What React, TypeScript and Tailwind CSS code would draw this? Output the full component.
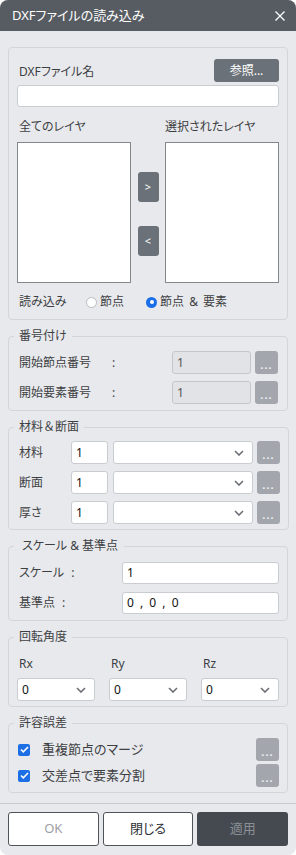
import React from "react";

const font = "font-['Noto_Sans','Noto_Sans_CJK_JP',sans-serif] [font-feature-settings:'palt']";

const Chevron = () => (
  <svg width="10" height="6" viewBox="0 0 10 6" className="shrink-0">
    <path d="M1 1l4 4 4-4" fill="none" stroke="#6b6f75" strokeWidth="1.6" />
  </svg>
);

const DotsButton = () => (
  <div className="w-[23px] h-[23px] shrink-0 rounded-[3px] bg-[#a3a7ad] flex items-end justify-center pb-[4px]">
    <span className="text-[#eef0f2] text-[11px] leading-none tracking-[1px] font-bold">...</span>
  </div>
);

const SelectBox = ({ value = "", className = "" }: { value?: string; className?: string }) => (
  <div
    className={
      "h-[23px] bg-white border border-[#c9ccd1] rounded-[3px] flex items-center justify-between pl-[4px] pr-[8px] text-[12px] text-[#111] " +
      className
    }
  >
    <span>{value}</span>
    <Chevron />
  </div>
);

const Fieldset = ({
  title,
  className = "",
  legendClass = "px-[5px]",
  children,
}: {
  title: React.ReactNode;
  className?: string;
  legendClass?: string;
  children: React.ReactNode;
}) => (
  <fieldset className={"border border-[#d2d5da] rounded-[4px] px-2 mt-2 " + className}>
    <legend className={"-ml-[3px] text-[12px] leading-4 text-[#3d3f43] " + legendClass}>{title}</legend>
    {children}
  </fieldset>
);

const Check = () => (
  <div className="w-[12px] h-[12px] rounded-[2px] bg-[#1d6fe6] flex items-center justify-center shrink-0">
    <svg width="9" height="7" viewBox="0 0 9 7">
      <path d="M1 3.5l2.3 2.3L8 1" fill="none" stroke="white" strokeWidth="1.6" />
    </svg>
  </div>
);

export default function App() {
  return (
    <div className={"w-[296px] h-[855px] bg-white " + font}>
      <div className="w-full h-full rounded-[8px] overflow-hidden bg-[#e8e9ed] flex flex-col">
        {/* title */}
        <div className="h-[31px] shrink-0 bg-[#575c63] flex items-center justify-between pl-[12px] pr-[11px]">
          <span className="text-white text-[13px]">DXFファイルの読み込み</span>
          <svg width="10" height="10" viewBox="0 0 10 10">
            <path d="M0.5 0.5l9 9M9.5 0.5l-9 9" stroke="white" strokeWidth="1.3" />
          </svg>
        </div>

        <div className="px-2 pt-4 text-[#3d3f43] text-[12px]">
          {/* file */}
          <div className="border border-[#d2d5da] rounded-[4px] px-2 pt-[11px] pb-[7px]">
            <div className="flex items-center justify-between">
              <span className="pl-[2px] pt-[3px]">DXFファイル名</span>
              <div className="w-[65px] h-[23px] rounded-[3px] bg-[#6b7178] text-white flex items-center justify-center text-[12px]">
                参照...
              </div>
            </div>
            <div className="mt-[3px] h-[22px] bg-white border border-[#c9ccd1] rounded-[3px]" />
            <div className="mt-3 flex justify-between leading-4">
              <span className="pl-[2px]">全てのレイヤ</span>
              <span className="w-[114px]">選択されたレイヤ</span>
            </div>
            <div className="mt-[7px] flex items-center">
              <div className="w-[114px] h-[141px] bg-white border border-[#84878c]" />
              <div className="flex-1 flex flex-col items-center gap-[24px] pt-[3px]">
                <div className="w-[21px] h-[30px] rounded-[3px] bg-[#6b7178] text-white flex items-center justify-center text-[11px]">&gt;</div>
                <div className="w-[21px] h-[30px] rounded-[3px] bg-[#6b7178] text-white flex items-center justify-center text-[11px]">&lt;</div>
              </div>
              <div className="w-[114px] h-[141px] bg-white border border-[#84878c]" />
            </div>
            <div className="mt-[9px] h-[20px] flex items-center">
              <span className="pl-[2px] w-[69px]">読み込み</span>
              <div className="w-[11px] h-[11px] rounded-full bg-white border border-[#b9bcc1]" />
              <span className="ml-[3px]">節点</span>
              <div className="ml-[22px] w-[11px] h-[11px] rounded-full bg-[#1a6fe8] flex items-center justify-center">
                <div className="w-[4px] h-[4px] rounded-full bg-white" />
              </div>
              <span className="ml-[3px] whitespace-pre [word-spacing:2px]">節点 &amp; 要素</span>
            </div>
          </div>

          {/* numbering */}
          <Fieldset title="番号付け" className="pt-[7px] pb-[6px]">
            {["開始節点番号", "開始要素番号"].map((t, i) => (
              <div key={t} className={"flex items-center h-[23px] " + (i > 0 ? "mt-[7px]" : "")}>
                <span className="pl-[2px] w-[95px]">{t}</span>
                <span className="w-[60px]">:</span>
                <div className="w-[79px] h-[23px] bg-[#e1e3e7] border border-[#c3c6cb] rounded-[3px] flex items-center pl-[4px] text-[#555]">1</div>
                <div className="ml-[4px]">
                  <DotsButton />
                </div>
              </div>
            ))}
          </Fieldset>

          {/* material */}
          <Fieldset
            title={
              <>
                材料<span className="[font-feature-settings:normal]">＆</span>断面
              </>
            }
            className="pt-[6px] pb-[5px]"
          >
            {["材料", "断面", "厚さ"].map((t, i) => (
              <div key={t} className={"flex items-center h-[23px] " + (i > 0 ? "mt-[7px]" : "")}>
                <span className="pl-[2px] w-[54px]">{t}</span>
                <div className="w-[37px] h-[23px] bg-white border border-[#c9ccd1] rounded-[3px] flex items-center pl-[4px] text-[#111]">1</div>
                <SelectBox className="ml-[5px] w-[140px]" />
                <div className="ml-[4px]">
                  <DotsButton />
                </div>
              </div>
            ))}
          </Fieldset>

          {/* scale */}
          <Fieldset title="スケール & 基準点" legendClass="pl-[8px] pr-[6px]" className="pt-[8px] pb-[6px]">
            {[
              ["スケール :", "1"],
              ["基準点 :", "0 , 0 , 0"],
            ].map(([t, v], i) => (
              <div key={t} className={"flex items-center h-[22px] " + (i > 0 ? "mt-[8px]" : "")}>
                <span className="pl-[2px] w-[105px] whitespace-pre [word-spacing:4px]">{t}</span>
                <div className="flex-1 h-[22px] bg-white border border-[#c9ccd1] rounded-[3px] flex items-center pl-[4px] text-[#111] whitespace-pre [word-spacing:3px]">{v}</div>
              </div>
            ))}
          </Fieldset>

          {/* rotation */}
          <Fieldset title="回転角度" className="pt-[11px] pb-[5px]">
            <div className="grid grid-cols-3 gap-x-[14px]">
              {["Rx", "Ry", "Rz"].map((r) => (
                <div key={r}>
                  <div className="leading-4 pl-[2px]">{r}</div>
                  <SelectBox value="0" className="mt-[6px] w-full" />
                </div>
              ))}
            </div>
          </Fieldset>

          {/* tolerance */}
          <Fieldset title="許容誤差" className="pt-[7px] pb-[5px]">
            {["重複節点のマージ", "交差点で要素分割"].map((t, i) => (
              <div key={t} className={"flex items-center h-[23px] " + (i > 0 ? "mt-[3px]" : "")}>
                <div className="pl-[1px]">
                  <Check />
                </div>
                <span className="ml-[12px] flex-1 text-[13px]">{t}</span>
                <DotsButton />
              </div>
            ))}
          </Fieldset>
        </div>

        <div className="mt-[10px] h-px bg-[#c8cbd0]" />

        <div className="px-2 mt-2 grid grid-cols-3 gap-1">
          <div className="h-[34px] bg-white border border-[#4f545a] rounded-[3px] flex items-center justify-center text-[13px] text-[#9da1a6]">OK</div>
          <div className="h-[34px] bg-white border border-[#4f545a] rounded-[3px] flex items-center justify-center text-[13px] text-[#2e3034]">閉じる</div>
          <div className="h-[34px] bg-[#454a51] rounded-[3px] flex items-center justify-center text-[13px] text-[#8a8f95]">適用</div>
        </div>
      </div>
    </div>
  );
}
